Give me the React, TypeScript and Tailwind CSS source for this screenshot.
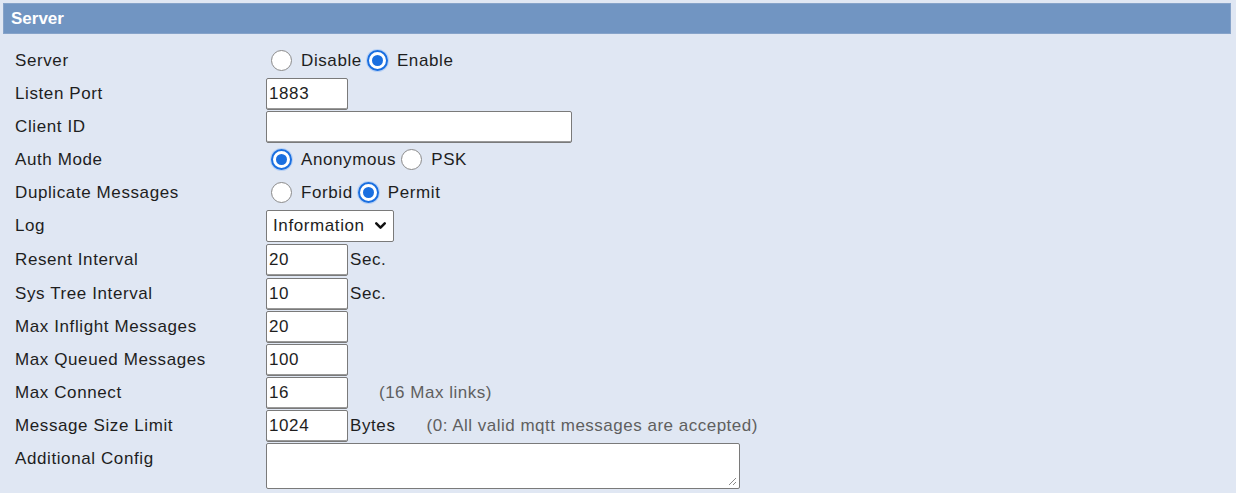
import React from "react";
import { ChevronDown } from "lucide-react";

function Radio({ checked }: { checked?: boolean }) {
  return checked ? (
    <span className="ml-[5px] mr-[9px] inline-flex h-[21px] w-[21px] shrink-0 items-center justify-center rounded-full border-2 border-[#1a6fe0] bg-white shadow-[0_0_0_1px_#b9d2f5]">
      <span className="h-[11px] w-[11px] rounded-full bg-[#1a6fe0]" />
    </span>
  ) : (
    <span className="ml-[5px] mr-[9px] inline-block h-[21px] w-[21px] shrink-0 rounded-full border-[1.5px] border-[#8a8a8a] bg-white" />
  );
}

function TextBox({ value, w = "w-[82px]" }: { value?: string; w?: string }) {
  return (
    <div className={`${w} flex h-[32px] items-center rounded-[2px] border border-[#7a7a7a] bg-white px-[2px] shadow-[inset_0_-1px_0_#9a9a9a]`}>
      {value}
    </div>
  );
}

function Row({ label, children, h = "h-[33px]" }: { label: string; children?: React.ReactNode; h?: string }) {
  return (
    <div className={`flex ${h} items-center`}>
      <div className="w-[266px] shrink-0 pl-[15px]">{label}</div>
      <div className="flex items-center">{children}</div>
    </div>
  );
}

function Note({ children }: { children: React.ReactNode }) {
  return <span className="ml-[31px] tracking-[0.5px] text-[#5f5f5f]">{children}</span>;
}

export default function App() {
  return (
    <div className="min-h-[493px] w-full bg-[#e0e7f3] pt-[3px] font-['Liberation_Sans',Arial,sans-serif] text-[17px] text-[#1e1e1e]">
      <div className="ml-[3px] mr-[5px] flex h-[31px] items-center border border-[#86a3c9] bg-[#7195c2] pl-[7px] text-[17px] font-bold text-white">
        Server
      </div>
      <div className="pt-[10px] tracking-[0.6px]">
        <Row label="Server">
          <Radio />
          <span>Disable</span>
          <Radio checked />
          <span>Enable</span>
        </Row>
        <Row label="Listen Port">
          <TextBox value="1883" />
        </Row>
        <Row label="Client ID">
          <TextBox w="w-[306px]" />
        </Row>
        <Row label="Auth Mode">
          <Radio checked />
          <span>Anonymous</span>
          <Radio />
          <span>PSK</span>
        </Row>
        <Row label="Duplicate Messages">
          <Radio />
          <span>Forbid</span>
          <Radio checked />
          <span>Permit</span>
        </Row>
        <Row label="Log">
          <div className="flex h-[32px] w-[128px] items-center justify-between rounded-[2px] border border-[#7a7a7a] bg-white pl-[6px] pr-[4px]">
            <span>Information</span>
            <ChevronDown size={17} strokeWidth={3.6} className="text-[#111]" />
          </div>
        </Row>
        <Row label="Resent Interval" h="h-[35px]">
          <TextBox value="20" />
          <span className="ml-[2px]">Sec.</span>
        </Row>
        <Row label="Sys Tree Interval">
          <TextBox value="10" />
          <span className="ml-[2px]">Sec.</span>
        </Row>
        <Row label="Max Inflight Messages">
          <TextBox value="20" />
        </Row>
        <Row label="Max Queued Messages">
          <TextBox value="100" />
        </Row>
        <Row label="Max Connect">
          <TextBox value="16" />
          <Note>(16 Max links)</Note>
        </Row>
        <Row label="Message Size Limit">
          <TextBox value="1024" />
          <span className="ml-[2px]">Bytes</span>
          <Note>(0: All valid mqtt messages are accepted)</Note>
        </Row>
        <div className="flex items-start">
          <div className="w-[266px] shrink-0 pl-[15px] pt-[4px]">Additional Config</div>
          <div className="relative mt-[1px] h-[46px] w-[474px] rounded-[2px] border border-[#7a7a7a] bg-white">
            <svg className="absolute bottom-[2px] right-[2px]" width="10" height="10" viewBox="0 0 10 10">
              <line x1="9" y1="2" x2="2" y2="9" stroke="#8a8a8a" strokeWidth="1" />
              <line x1="9" y1="6" x2="6" y2="9" stroke="#8a8a8a" strokeWidth="1" />
            </svg>
          </div>
        </div>
      </div>
    </div>
  );
}
